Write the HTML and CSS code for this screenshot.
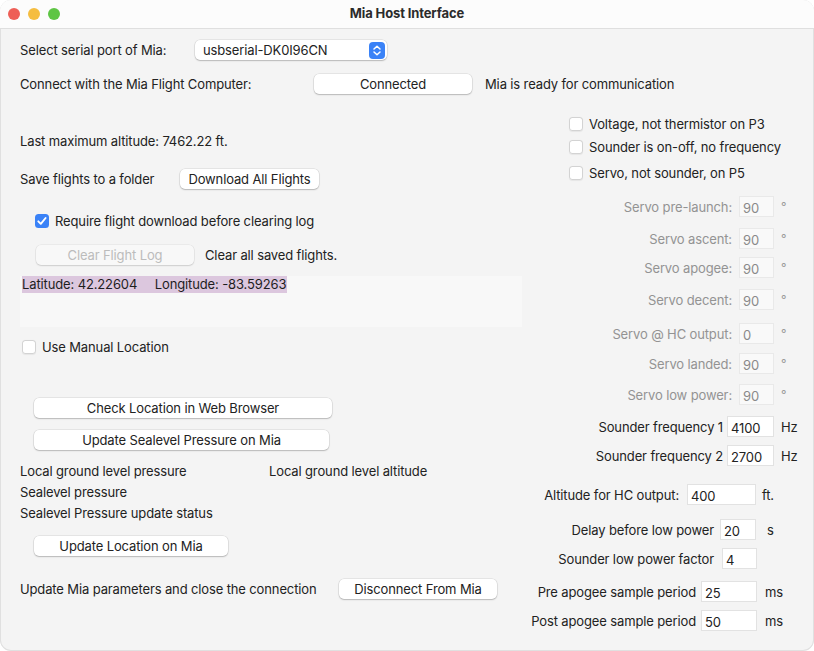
FILE: index.html
```html
<!DOCTYPE html>
<html>
<head>
<meta charset="utf-8">
<link rel="stylesheet" href="styles.css">
</head>
<body>
<div class="window">
  <div class="titlebar">
    <div class="lights">
      <span class="light red"></span>
      <span class="light yellow"></span>
      <span class="light green"></span>
    </div>
    <div class="title">Mia Host Interface</div>
  </div>
  <div class="content">
    <div class="row port-row">
      <span class="port-label">Select serial port of Mia:</span>
      <div class="popup">
        <span class="popup-text">usbserial-DK0I96CN</span>
        <span class="stepper">
          <svg width="16" height="17" viewBox="0 0 16 17"><path d="M5 7 L8 4.2 L11 7" fill="none" stroke="#fff" stroke-width="1.5" stroke-linecap="round" stroke-linejoin="round"/><path d="M5 10 L8 12.8 L11 10" fill="none" stroke="#fff" stroke-width="1.5" stroke-linecap="round" stroke-linejoin="round"/></svg>
        </span>
      </div>
    </div>
    <div class="row connect-row">
      <span class="connect-label">Connect with the Mia Flight Computer:</span>
      <button class="btn btn-connected">Connected</button>
      <span class="status">Mia is ready for communication</span>
    </div>

    <div class="columns">
      <div class="left">
        <div class="row alt-row">Last maximum altitude: 7462.22 ft.</div>
        <div class="row save-row">
          <span class="save-label">Save flights to a folder</span>
          <button class="btn btn-download">Download All Flights</button>
        </div>
        <div class="row require-row">
          <span class="check checked">
            <svg width="14" height="14" viewBox="0 0 14 14"><path d="M3.3 7.3 L5.8 9.8 L10.6 4" fill="none" stroke="#fff" stroke-width="1.9" stroke-linecap="round" stroke-linejoin="round"/></svg>
          </span>
          <span class="check-text">Require flight download before clearing log</span>
        </div>
        <div class="row clear-row">
          <button class="btn btn-clear" disabled>Clear Flight Log</button>
          <span class="clear-text">Clear all saved flights.</span>
        </div>
        <div class="latbox">
          <span class="highlight">Latitude: 42.22604&nbsp;&nbsp;&nbsp;&nbsp;&nbsp;Longitude: -83.59263</span>
        </div>
        <div class="row manual-row">
          <span class="check"></span>
          <span class="check-text">Use Manual Location</span>
        </div>
        <button class="btn btn-wide btn-check">Check Location in Web Browser</button>
        <button class="btn btn-wide btn-sealevel">Update Sealevel Pressure on Mia</button>
        <div class="info">
          <span>Local ground level pressure</span>
          <span>Local ground level altitude</span>
          <span>Sealevel pressure</span>
          <span></span>
          <span>Sealevel Pressure update status</span>
          <span></span>
        </div>
        <button class="btn btn-wide btn-location">Update Location on Mia</button>
        <div class="row disconnect-row">
          <span class="disconnect-label">Update Mia parameters and close the connection</span>
          <button class="btn btn-disconnect">Disconnect From Mia</button>
        </div>
      </div>

      <div class="right">
        <div class="opt-row"><span class="check"></span><span class="check-text">Voltage, not thermistor on P3</span></div>
        <div class="opt-row"><span class="check"></span><span class="check-text">Sounder is on-off, no frequency</span></div>
        <div class="opt-row"><span class="check"></span><span class="check-text">Servo, not sounder, on P5</span></div>

        <div class="frow servo"><span class="flabel">Servo pre-launch:</span><span class="field">90</span><span class="unit">°</span></div>
        <div class="frow servo"><span class="flabel">Servo ascent:</span><span class="field">90</span><span class="unit">°</span></div>
        <div class="frow servo"><span class="flabel">Servo apogee:</span><span class="field">90</span><span class="unit">°</span></div>
        <div class="frow servo"><span class="flabel">Servo decent:</span><span class="field">90</span><span class="unit">°</span></div>
        <div class="frow servo"><span class="flabel">Servo @ HC output:</span><span class="field">0</span><span class="unit">°</span></div>
        <div class="frow servo"><span class="flabel">Servo landed:</span><span class="field">90</span><span class="unit">°</span></div>
        <div class="frow servo"><span class="flabel">Servo low power:</span><span class="field">90</span><span class="unit">°</span></div>

        <div class="frow sounder"><span class="flabel">Sounder frequency 1</span><span class="field">4100</span><span class="unit">Hz</span></div>
        <div class="frow sounder"><span class="flabel">Sounder frequency 2</span><span class="field">2700</span><span class="unit">Hz</span></div>

        <div class="frow altitude"><span class="flabel">Altitude for HC output:</span><span class="field">400</span><span class="unit">ft.</span></div>
        <div class="frow delay"><span class="flabel">Delay before low power</span><span class="field">20</span><span class="unit">s</span></div>
        <div class="frow factor"><span class="flabel">Sounder low power factor</span><span class="field">4</span><span class="unit"></span></div>
        <div class="frow period"><span class="flabel">Pre apogee sample period</span><span class="field">25</span><span class="unit">ms</span></div>
        <div class="frow period"><span class="flabel">Post apogee sample period</span><span class="field">50</span><span class="unit">ms</span></div>
      </div>
    </div>
  </div>
</div>
</body>
</html>
```

FILE: styles.css
```css
* { box-sizing: border-box; }

html, body {
  margin: 0;
  padding: 0;
  background: #ffffff;
}

body {
  font-family: "Inter", "Liberation Sans", sans-serif;
  font-size: 13px;
  letter-spacing: -0.13px;
  color: #222222;
}

.window {
  width: 814px;
  height: 651px;
  background: #f4f4f4;
  border-radius: 11px;
  overflow: hidden;
  box-shadow: inset 0 0 0 1px #e0e0e0;
  display: flex;
  flex-direction: column;
}

.titlebar {
  height: 29px;
  flex: none;
  background: #fcfcfc;
  border-bottom: 1px solid #dfdfdf;
  display: flex;
  align-items: center;
  position: relative;
}

.lights {
  display: flex;
  gap: 8px;
  padding-left: 8px;
}

.light {
  width: 12px;
  height: 12px;
  border-radius: 50%;
  display: block;
}
.light.red { background: #ee5f57; }
.light.yellow { background: #f5bd40; }
.light.green { background: #5ec544; }

.title {
  position: absolute;
  left: 0;
  right: 0;
  top: 0;
  height: 28px;
  line-height: 27px;
  text-align: center;
  font-weight: 700;
  font-size: 13px;
  color: #2b2b2b;
}

.content {
  padding: 0 14px 0 20px;
  flex: 1;
}

.row {
  display: flex;
  align-items: center;
  height: 20px;
  white-space: nowrap;
}

/* buttons */
.btn {
  font-family: inherit;
  font-size: 13px;
  letter-spacing: inherit;
  color: #222222;
  height: 20px;
  padding: 0;
  border: none;
  border-radius: 5px;
  background: #ffffff;
  box-shadow: 0 0 0 0.5px rgba(0, 0, 0, 0.12), 0 1px 1.5px rgba(0, 0, 0, 0.2);
  text-align: center;
  line-height: 20px;
  display: block;
  white-space: nowrap;
}

.btn-clear {
  background: #f8f8f8;
  color: #bcbcbc;
  box-shadow: 0 0 0 0.5px rgba(0, 0, 0, 0.08), 0 1px 1.5px rgba(0, 0, 0, 0.12);
}

/* top rows */
.port-row { margin-top: 11px; }
.port-label { width: 175px; }

.popup {
  width: 192px;
  height: 20px;
  background: #ffffff;
  border-radius: 5px;
  box-shadow: 0 0 0 0.5px rgba(0, 0, 0, 0.12), 0 1px 1.5px rgba(0, 0, 0, 0.2);
  display: flex;
  align-items: center;
  justify-content: space-between;
  padding: 0 2px 0 8px;
}

.stepper {
  width: 16px;
  height: 17px;
  border-radius: 4px;
  background: #3a82f7;
  display: flex;
}

.connect-row { margin-top: 14px; }
.connect-label { width: 294px; }
.btn-connected { width: 158px; }
.status { margin-left: 13px; }

/* columns */
.columns {
  display: grid;
  grid-template-columns: 505px 1fr;
}

.left {
  display: flex;
  flex-direction: column;
  align-items: flex-start;
}

.alt-row { margin-top: 37px; }

.save-row { margin-top: 18px; }
.save-label { width: 160px; }
.btn-download { width: 139px; }

.require-row { margin-top: 22px; padding-left: 15px; }

.check {
  width: 14px;
  height: 14px;
  border-radius: 3.5px;
  background: #ffffff;
  box-shadow: inset 0 0 0 1px #d3d3d3, 0 0.5px 1px rgba(0, 0, 0, 0.06);
  display: block;
  flex: none;
}
.check.checked {
  background: #3a82f7;
  box-shadow: none;
}
.check svg { display: block; }
.check-text { margin-left: 6px; }

.clear-row { margin-top: 14px; padding-left: 16px; }
.btn-clear { width: 158px; }
.clear-text { margin-left: 11px; }

.latbox {
  margin-top: 11px;
  width: 502px;
  height: 51px;
  background: #f8f8f8;
  padding-left: 2px;
}
.highlight {
  display: inline-block;
  background: #dcc7de;
  height: 17px;
  line-height: 17px;
  padding-right: 1px;
  white-space: nowrap;
  color: #1e1e1e;
}

.manual-row { margin-top: 10px; padding-left: 2px; }

.btn-wide { margin-left: 14px; }
.btn-check { margin-top: 41px; width: 298px; }
.btn-sealevel { margin-top: 12px; width: 295px; }

.info {
  margin-top: 11px;
  display: grid;
  grid-template-columns: 249px auto;
  grid-auto-rows: 21px;
  line-height: 21px;
  white-space: nowrap;
}

.btn-location { margin-top: 12px; width: 194px; }

.disconnect-row { margin-top: 23px; }
.disconnect-label { width: 319px; }
.btn-disconnect { width: 158px; }

/* right column */
.right {
  padding-top: 20px;
  display: grid;
  grid-template-rows: 23px 26px 33px 32px 29px 32px 34px 30px 31px 32px 29px 39px 35px 29px 33px 29px 21px;
  align-items: start;
}

.opt-row {
  display: flex;
  align-items: center;
  height: 20px;
  padding-left: 44px;
  white-space: nowrap;
}

.frow {
  display: flex;
  align-items: center;
  justify-content: flex-end;
  height: 21px;
  white-space: nowrap;
}

.field {
  display: block;
  height: 21px;
  background: #ffffff;
  box-shadow: inset 0 0 0 1px #e2e2e2, inset 0 1px 0 #d8d8d8;
  padding: 3px 0 0 4px;
  line-height: 19px;
  font-size: 13px;
  color: #222222;
}

.unit { display: block; }

.servo .flabel { color: #939393; }
.servo .field { width: 35px; margin-left: 7px; background: #f9f9f9; color: #8a8a8a; box-shadow: inset 0 0 0 1px #e9e9e9; }
.servo .unit { width: 19px; margin-left: 7px; color: #9a9a9a; font-size: 12px; line-height: 14px; padding-bottom: 0; }

.sounder .field { width: 47px; margin-left: 4px; }
.sounder .unit { width: 19px; margin-left: 7px; }

.altitude .field { width: 69px; margin-left: 8px; }
.altitude .unit { width: 38px; margin-left: 6px; }

.delay .field { width: 36px; margin-left: 6px; }
.delay .unit { width: 33px; margin-left: 11px; }

.factor .field { width: 35px; margin-left: 8px; }
.factor .unit { width: 43px; }

.period .field { width: 56px; margin-left: 5px; }
.period .unit { width: 35px; margin-left: 8px; }
```
